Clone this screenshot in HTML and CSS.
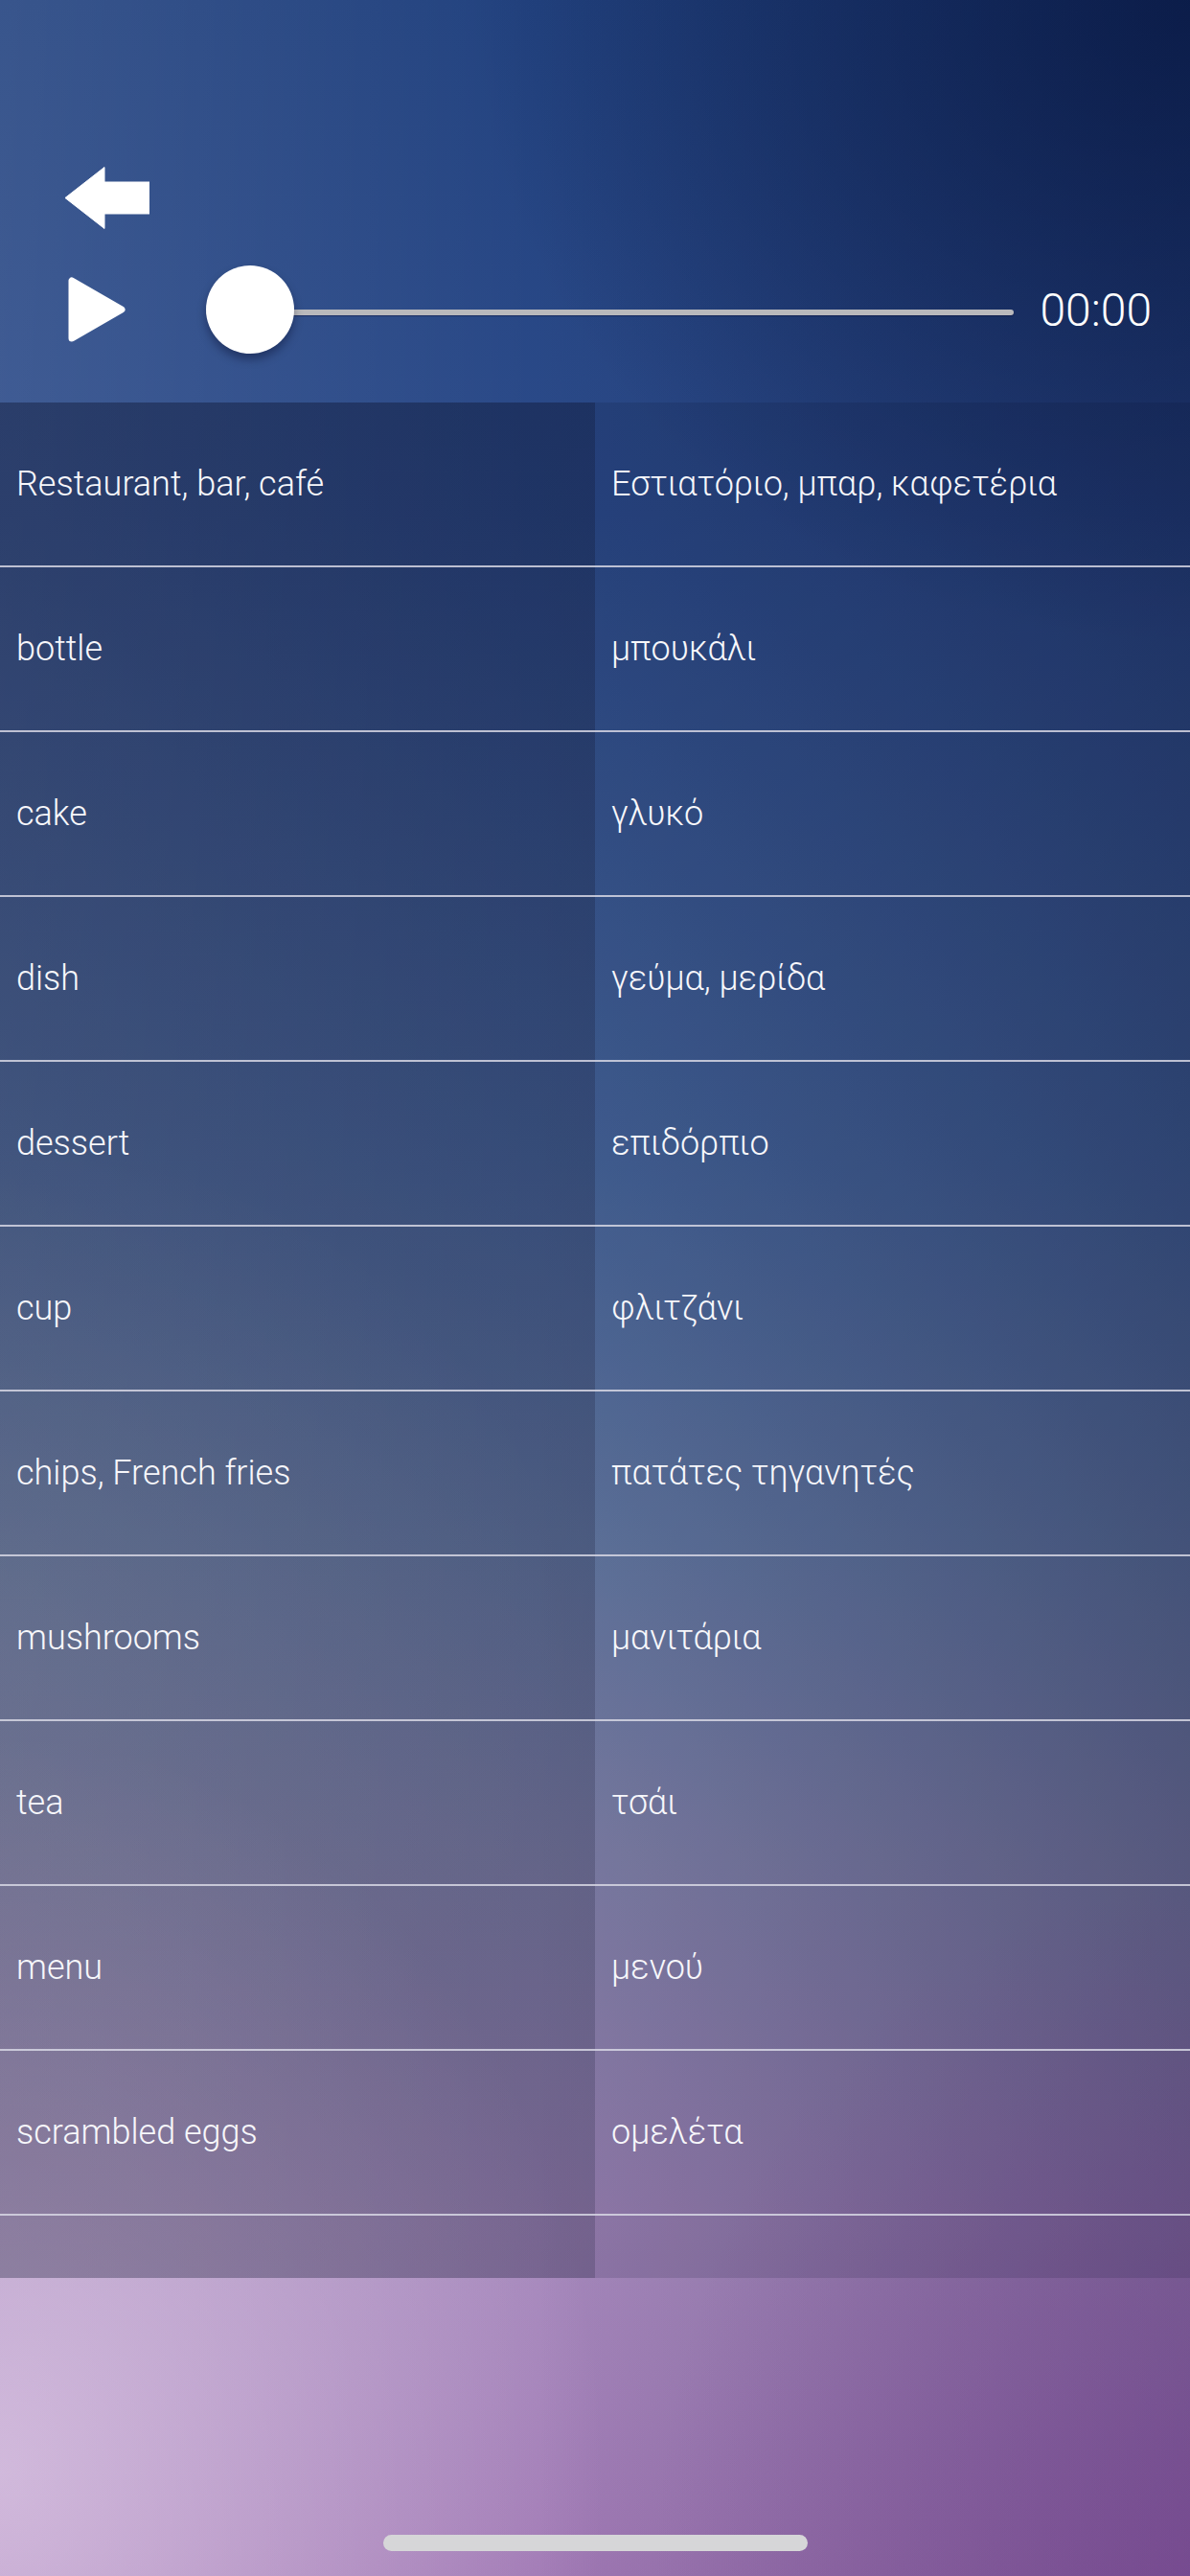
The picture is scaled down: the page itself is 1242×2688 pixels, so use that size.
FILE: index.html
```html
<!DOCTYPE html>
<html lang="en">
<head>
    <meta charset="UTF-8">
    <meta name="viewport" content="width=device-width, initial-scale=1.0">
    <title>Restaurant, bar, café</title>
    <link rel="stylesheet" href="styles.css">
</head>
<body>
    <div class="screen">
        <div class="header">
            <button class="back" aria-label="Back">
                <svg width="89" height="65" viewBox="0 0 89 65">
                    <path d="M1 32.5 L42 0.5 L42 16 L89 16 L89 49 L42 49 L42 64.5 Z" fill="#fff" stroke="#fff" stroke-width="1" stroke-linejoin="round"/>
                </svg>
            </button>
            <div class="player">
                <button class="play" aria-label="Play">
                    <svg width="60" height="68" viewBox="0 0 60 68">
                        <path d="M4 4 L4 64 L56 34 Z" fill="#fff" stroke="#fff" stroke-width="7" stroke-linejoin="round"/>
                    </svg>
                </button>
                <div class="slider">
                    <div class="track"></div>
                    <div class="thumb"></div>
                </div>
                <span class="time">00:00</span>
            </div>
        </div>

        <div class="list">
            <div class="row"><div class="cell">Restaurant, bar, café</div><div class="cell">Εστιατόριο, μπαρ, καφετέρια</div></div>
            <div class="row"><div class="cell">bottle</div><div class="cell">μπουκάλι</div></div>
            <div class="row"><div class="cell">cake</div><div class="cell">γλυκό</div></div>
            <div class="row"><div class="cell">dish</div><div class="cell">γεύμα, μερίδα</div></div>
            <div class="row"><div class="cell">dessert</div><div class="cell">επιδόρπιο</div></div>
            <div class="row"><div class="cell">cup</div><div class="cell">φλιτζάνι</div></div>
            <div class="row"><div class="cell">chips, French fries</div><div class="cell">πατάτες τηγανητές</div></div>
            <div class="row"><div class="cell">mushrooms</div><div class="cell">μανιτάρια</div></div>
            <div class="row"><div class="cell">tea</div><div class="cell">τσάι</div></div>
            <div class="row"><div class="cell">menu</div><div class="cell">μενού</div></div>
            <div class="row"><div class="cell">scrambled eggs</div><div class="cell">ομελέτα</div></div>
            <div class="row"><div class="cell"></div><div class="cell"></div></div>
        </div>

        <div class="footer">
            <div class="home-bar"></div>
        </div>
    </div>
</body>
</html>
```

FILE: styles.css
```css
body {
    margin: 0;
    font-family: Roboto, "Noto Sans", sans-serif;
    color: #fff;
}
.screen {
    width: 1242px;
    height: 2688px;
    display: flex;
    flex-direction: column;
    overflow: hidden;
    background:
        radial-gradient(ellipse 1000px 900px at 100% 0%, rgba(0, 12, 50, 0.55), rgba(0, 12, 50, 0) 75%),
        radial-gradient(ellipse 900px 1100px at 0% 96%, rgba(225, 205, 232, 0.7), rgba(225, 205, 232, 0) 70%),
        radial-gradient(ellipse 800px 700px at 0% 64%, rgba(200, 210, 225, 0.2), rgba(200, 210, 225, 0) 75%),
        radial-gradient(ellipse 700px 900px at 100% 100%, rgba(125, 60, 150, 0.45), rgba(125, 60, 150, 0) 80%),
        linear-gradient(to right, rgba(255, 255, 255, 0.1), rgba(255, 255, 255, 0) 45%, rgba(5, 10, 45, 0.3)),
        linear-gradient(to bottom, #22427f 0%, #2c4b8a 20%, #4a6aa0 45%, #6c82ac 60%, #8c8cb4 72%, #a68abd 86%, #a078b4 100%);
}
button {
    background: none;
    border: none;
    padding: 0;
    cursor: pointer;
}

/* top bar with back button and audio player */
.header {
    height: 420px;
    flex-shrink: 0;
    box-sizing: border-box;
    padding: 174px 40px 0 67px;
}
.back svg {
    display: block;
}
.player {
    display: flex;
    align-items: center;
    margin-top: 34px;
    height: 92px;
}
.play {
    margin-left: 4px;
    margin-right: 84px;
}
.play svg {
    display: block;
}
.slider {
    position: relative;
    flex: 1;
    height: 92px;
    display: flex;
    align-items: center;
}
.track {
    width: 100%;
    height: 6px;
    margin-top: 6px;
    border-radius: 3px;
    background: #b9b9bc;
    box-shadow: 0 1px 1px rgba(0, 0, 40, 0.4);
}
.thumb {
    position: absolute;
    left: 0;
    top: 0;
    width: 92px;
    height: 92px;
    border-radius: 50%;
    background: #fff;
    box-shadow: 0 6px 10px rgba(0, 0, 30, 0.35);
}
.time {
    margin-left: 27px;
    font-size: 48px;
    font-weight: 300;
}

/* word list: left column gets a darker tint */
.list {
    height: 1957px;
    flex-shrink: 0;
    overflow: hidden;
    background:
        linear-gradient(to bottom, rgba(15, 22, 50, 0.32), rgba(28, 32, 60, 0.28) 40%, rgba(40, 40, 68, 0.24)) left top / 621px 100% no-repeat,
        rgba(10, 15, 40, 0.14);
}
.row {
    display: grid;
    grid-template-columns: 621px 1fr;
    height: 172px;
    box-sizing: border-box;
    border-bottom: 2px solid rgba(215, 215, 228, 0.85);
}
.cell {
    display: flex;
    align-items: center;
    padding-left: 17px;
    font-size: 36px;
    font-weight: 300;
    color: #f7f7fb;
}

.footer {
    flex: 1;
    display: flex;
    justify-content: center;
    align-items: flex-end;
    padding-bottom: 26px;
}
.home-bar {
    width: 443px;
    height: 17px;
    border-radius: 9px;
    background: #d6d6d8;
}
```
